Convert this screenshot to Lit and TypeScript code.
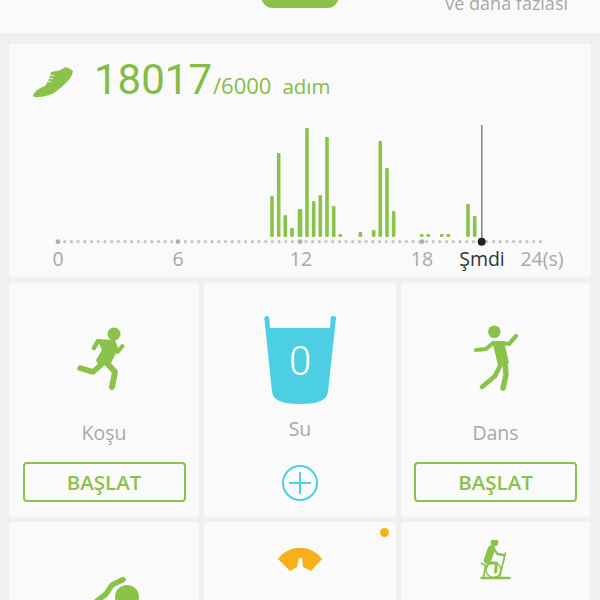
import { LitElement, css, html, svg, unsafeCSS } from "lit";
import { customElement } from "lit/decorators.js";

const GREEN = "#8bc34a";
const green = unsafeCSS(GREEN);

// x, top of each bar in page pixels, all of them stand on y = 237
const bars: [number, number, number?][] = [
    [272, 196], [278.7, 153], [285.3, 215], [292, 228], [300, 209, 4.6], [307, 128],
    [313.7, 201], [320.3, 195], [327, 137], [333.7, 206], [340.3, 234], [360.3, 232],
    [373.7, 230], [380.3, 141], [387, 168], [393.7, 211], [421.7, 234], [428.3, 234],
    [441.7, 234], [448.3, 234], [468, 204], [474.7, 216],
];

const axisDots = Array.from({ length: 73 }, (_, i) => 58 + i * 6.7);

const axisLabels: [number, string][] = [[58, "0"], [178, "6"], [301, "12"], [422, "18"], [542, "24(s)"]];

const runner = html`<svg class="icon" viewBox="4 0 80 80" fill="none" stroke=${GREEN} stroke-linecap="round" stroke-linejoin="round">
    <circle cx="54" cy="19" r="6.5" fill=${GREEN} stroke="none"></circle>
    <path fill=${GREEN} stroke="none" d="M37 24 L55 25 L57 36 L51 48 L39 52 L36 45 L42 35 Z"></path>
    <path d="M38 26 L34 33" stroke-width="4.5"></path>
    <path d="M54 28 L57.5 37 L62.5 31" stroke-width="4"></path>
    <path d="M43 48 L33 57 L20 53" stroke-width="5.5"></path>
    <path d="M46 47 L55 57 L52 72" stroke-width="6"></path>
</svg>`;

const dancer = html`<svg class="icon" viewBox="0 0 80 80" fill="none" stroke=${GREEN} stroke-linecap="round" stroke-linejoin="round">
    <circle cx="38.3" cy="16.7" r="6.3" fill=${GREEN} stroke="none"></circle>
    <path fill=${GREEN} stroke="none" d="M36 26 L48 26 L53 48 L42 50 Z"></path>
    <path d="M37 28 L30 34 L20 35" stroke-width="4.2"></path>
    <path d="M46 28 L53 29 L60 21" stroke-width="4.2"></path>
    <path d="M49 47 L50 60 L47 73" stroke-width="5.5"></path>
    <path d="M45 49 L39 61 L26 72" stroke-width="4.8"></path>
</svg>`;

@customElement("app-root")
export class AppRoot extends LitElement {
    chart() {
        return html`<svg class="chart" viewBox="9 115 582 162">
            ${axisDots.map(x => svg`<circle cx=${x} cy="241.7" r="1.6" fill="#c4c4c4"></circle>`)}
            ${[58, 178, 300, 422].map(x => svg`<circle cx=${x} cy="241.7" r="2.4" fill="#b0b0b0"></circle>`)}
            ${bars.map(([x, top, w = 3.6]) => svg`<rect x=${x - w / 2} y=${top} width=${w} height=${237 - top} rx="1" fill=${GREEN}></rect>`)}
            <rect x="481" y="125" width="1.6" height="117" fill="#888"></rect>
            <circle cx="481.7" cy="241.7" r="4" fill="#222"></circle>
            ${axisLabels.map(([x, t]) => svg`<text x=${x} y="266" text-anchor="middle" class="axis">${t}</text>`)}
            <text x="482" y="266" text-anchor="middle" class="axis now">Şmdi</text>
        </svg>`;
    }

    render() {return html`
        <div class="top">
            <div class="pill"></div>
            <div class="more">ve daha fazlası</div>
        </div>
        <div class="page">
            <section class="steps">
                <header>
                    <svg class="shoe" viewBox="33 66 41 31">
                        <path fill=${GREEN} d="M33 94 Q36 88 45 85 Q49 80 51 71 L56 70 Q60 70 65 66 Q70 67 73 70 Q72 76 67 81 Q60 88 54 92 Q46 96 38 96 Q33 97 33 94 Z"></path>
                        <path stroke="#fafafa" stroke-width="1" d="M50 74 L54 75 M49 77 L53 78 M47 80 L51 81"></path>
                    </svg>
                    <span class="count">18017</span>
                    <span class="goal">/6000</span>
                    <span class="unit">adım</span>
                </header>
                ${this.chart()}
            </section>

            <div class="grid">
                <div class="tile">
                    ${runner}
                    <div class="name">Koşu</div>
                    <div class="start">BAŞLAT</div>
                </div>

                <div class="tile water">
                    <svg class="cup" viewBox="260 310 80 100">
                        <path fill="#4ccfe3" d="M264.3 318 Q264.3 316 266.8 316 Q269.3 316 269.3 318 L270 328 L330 328 L330.7 318 Q330.7 316 333.2 316 Q336 316 336 318 L328 392 Q327 400 315 403 Q300 405 285 403 Q273 400 272 392 Z"></path>
                        <text x="300" y="375" text-anchor="middle" class="zero">0</text>
                    </svg>
                    <div class="name">Su</div>
                    <svg class="plus" viewBox="0 0 36 36" fill="none" stroke="#4ccfe3" stroke-width="2">
                        <circle cx="18" cy="18" r="17"></circle>
                        <path d="M7 18 H29 M18 7 V29"></path>
                    </svg>
                </div>

                <div class="tile">
                    ${dancer}
                    <div class="name">Dans</div>
                    <div class="start">BAŞLAT</div>
                </div>

                <div class="tile low">
                    <svg class="stretch" viewBox="60 570 88 30" fill="none" stroke=${GREEN} stroke-linecap="round" stroke-linejoin="round">
                        <circle cx="127" cy="597" r="12" fill=${GREEN} stroke="none"></circle>
                        <path d="M123 579.5 L112 585 L106 594 L97 601" stroke-width="5.5"></path>
                    </svg>
                </div>

                <div class="tile low">
                    <i class="badge"></i>
                    <svg class="scale" viewBox="276 546 48 27">
                        <path fill="#f5b01a" d="M278 559 A27 27 0 0 1 322 559 L311 571 L303 567 L302 558 L299 558 L297 567 L290 571 Z"></path>
                    </svg>
                </div>

                <div class="tile low">
                    <svg class="bike" viewBox="478.5 540 34 40" fill="none" stroke=${GREEN} stroke-linecap="round" stroke-linejoin="round">
                        <circle cx="494" cy="542.5" r="3.8" fill=${GREEN} stroke="none"></circle>
                        <path d="M491 549 L487 560" stroke-width="7.5"></path>
                        <path d="M493 549 L497 554 L503 555" stroke-width="2.4"></path>
                        <path d="M487 563 L496 563 L495 572" stroke-width="3"></path>
                        <circle cx="493" cy="570" r="7.5" stroke-width="1.6"></circle>
                        <path d="M505 553 L499 577 M481 563.5 L487 566 M485 566 L483 577" stroke-width="1.8"></path>
                        <path d="M481 578 H509" stroke-width="2.6"></path>
                    </svg>
                </div>
            </div>
        </div>
    `}

    static styles = css`
        :host {
            display: block;
            width: 600px;
            height: 600px;
            overflow: hidden;
            background-color: #f0f0f0;
            font-family: "Open Sans", "Noto Sans", sans-serif;
        }

        .top {
            height: 33px;
            background-color: #fafafa;
            position: relative;
            overflow: hidden;
        }
        .pill {
            position: absolute;
            left: 261px;
            top: -32px;
            width: 78px;
            height: 40px;
            border-radius: 12px;
            background-color: ${green};
        }
        .more {
            position: absolute;
            right: 32px;
            top: -10px;
            font-size: 18px;
            line-height: 26px;
            color: #a8a8a8;
            white-space: nowrap;
        }

        .page {
            padding: 11px 9px 0 9px;
        }

        .steps {
            height: 233px;
            background-color: #fafafa;
            border-radius: 3px;
        }
        header {
            height: 71px;
            box-sizing: border-box;
            padding: 14px 0 0 24px;
            display: flex;
            align-items: baseline;
            color: #84bd45;
        }
        .shoe {
            width: 41px;
            height: 31px;
            margin-right: 20px;
            align-self: flex-start;
            margin-top: 9px;
        }
        .count {
            font-family: Roboto, sans-serif;
            font-size: 42px;
            line-height: 44px;
        }
        .goal {
            font-size: 22px;
            margin-left: 1px;
        }
        .unit {
            font-size: 20.5px;
            margin-left: 11px;
        }

        .chart {
            display: block;
            width: 582px;
            height: 162px;
        }
        .axis {
            font-size: 19.5px;
            fill: #a8a8a8;
            font-family: "Open Sans", sans-serif;
        }
        .now {
            fill: #333;
        }

        .grid {
            margin-top: 6px;
            display: grid;
            grid-template-columns: 190px 192px 189px;
            grid-auto-rows: 234px;
            column-gap: 5px;
            row-gap: 5px;
        }
        .tile {
            position: relative;
            background-color: #fafafa;
            border-radius: 3px;
            display: flex;
            flex-direction: column;
            align-items: center;
        }
        .icon {
            width: 80px;
            height: 80px;
            margin-top: 32px;
        }
        .name {
            font-size: 19.5px;
            line-height: 24px;
            color: #a8a8a8;
            margin-top: 26px;
        }
        .start {
            width: 163px;
            height: 40px;
            box-sizing: border-box;
            margin-top: 17px;
            border: 2px solid ${green};
            border-radius: 4px;
            color: ${green};
            font-size: 20.5px;
            font-weight: 600;
            line-height: 36px;
            text-align: center;
        }

        .cup {
            width: 80px;
            height: 100px;
            margin-top: 27px;
        }
        .zero {
            font-family: Roboto, sans-serif;
            font-weight: 300;
            font-size: 40px;
            fill: #fff;
        }
        .water .name {
            margin-top: 7px;
        }
        .plus {
            width: 36px;
            height: 36px;
            margin-top: 24px;
        }

        .stretch {
            width: 88px;
            height: 30px;
            margin-top: 48px;
        }
        .scale {
            width: 48px;
            height: 27px;
            margin-top: 24px;
        }
        .bike {
            width: 34px;
            height: 40px;
            margin-top: 18px;
        }
        .badge {
            position: absolute;
            top: 6px;
            right: 7px;
            width: 9px;
            height: 9px;
            border-radius: 50%;
            background-color: #f5b01a;
        }
    `
}
